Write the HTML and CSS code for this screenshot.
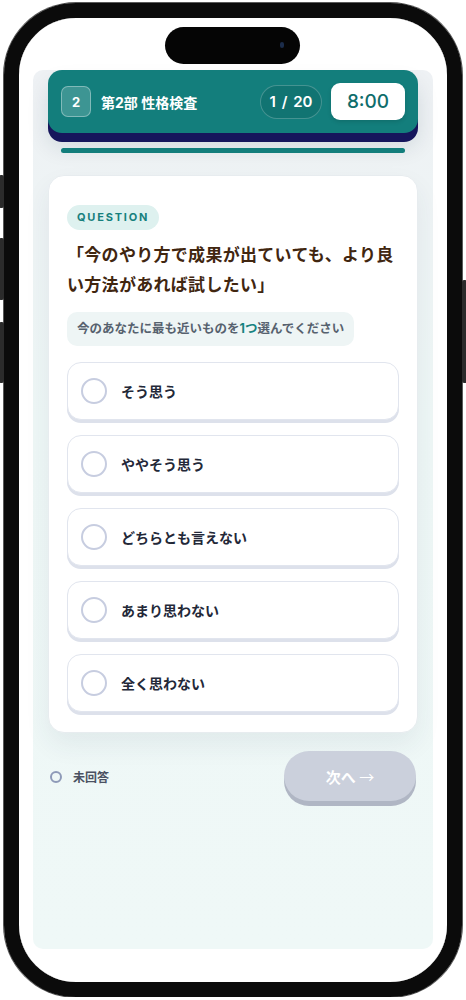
FILE: index.html
```html
<!DOCTYPE html>
<html lang="ja">

<head>
    <meta charset="UTF-8">
    <meta name="viewport" content="width=device-width, initial-scale=1.0">
    <title>第2部 性格検査</title>
    <link rel="stylesheet" href="styles.css">
</head>

<body>
    <div class="device">
        <span class="side-btn btn-action"></span>
        <span class="side-btn btn-vol-up"></span>
        <span class="side-btn btn-vol-down"></span>
        <span class="side-btn btn-power"></span>

        <div class="screen">
            <div class="island"><span class="cam"></span></div>

            <div class="app">
                <header class="test-header">
                    <div class="part">
                        <span class="part-no">2</span>
                        <span class="part-title">第2部 性格検査</span>
                    </div>
                    <div class="status">
                        <span class="counter">1 / 20</span>
                        <span class="timer">8:00</span>
                    </div>
                </header>

                <div class="progress">
                    <div class="progress-fill" style="width: 100%"></div>
                </div>

                <main class="question-card">
                    <span class="q-label">QUESTION</span>
                    <h2 class="q-text">「今のやり方で成果が出ていても、より良い方法があれば試したい」</h2>
                    <p class="q-hint">今のあなたに最も近いものを<strong>1つ</strong>選んでください</p>

                    <ul class="options">
                        <li class="option"><span class="radio"></span>そう思う</li>
                        <li class="option"><span class="radio"></span>ややそう思う</li>
                        <li class="option"><span class="radio"></span>どちらとも言えない</li>
                        <li class="option"><span class="radio"></span>あまり思わない</li>
                        <li class="option"><span class="radio"></span>全く思わない</li>
                    </ul>
                </main>

                <footer class="answer-bar">
                    <div class="answer-state">
                        <span class="state-dot"></span>
                        <span>未回答</span>
                    </div>
                    <button class="next-btn" disabled>次へ <span class="arrow">→</span></button>
                </footer>
            </div>
        </div>
    </div>
</body>

</html>
```

FILE: styles.css
```css
:root {
    --teal: #137e7c;
    --navy: #16165c;
    --ink: #232838;
    --brown: #412610;
}

body {
    margin: 0;
    background: #fff;
    font-family: Inter, "Noto Sans CJK JP", sans-serif;
}

/* phone frame */
.device {
    position: relative;
    width: 458px;
    height: 994px;
    margin: 3px 0 0 4px;
    box-sizing: border-box;
    border: 15px solid #0b0b0b;
    border-radius: 72px;
    box-shadow: 0 0 0 1px #5a5a5a, inset 0 0 0 1px #2a2a2a;
}

.side-btn {
    position: absolute;
    width: 5px;
    background: #2b2b2b;
    border-radius: 2px;
}

.btn-action {
    left: -20px;
    top: 157px;
    height: 33px;
}

.btn-vol-up {
    left: -20px;
    top: 220px;
    height: 62px;
}

.btn-vol-down {
    left: -20px;
    top: 304px;
    height: 61px;
}

.btn-power {
    right: -20px;
    top: 262px;
    height: 103px;
}

.screen {
    position: relative;
    height: 100%;
    box-sizing: border-box;
    padding: 52px 14px 33px;
    background: #fff;
    border-radius: 57px;
    overflow: hidden;
}

.island {
    position: absolute;
    left: 146px;
    top: 9px;
    width: 135px;
    height: 37px;
    background: #050505;
    border-radius: 19px;
    z-index: 2;
}

.island .cam {
    position: absolute;
    right: 16px;
    top: 15px;
    width: 4px;
    height: 6px;
    border-radius: 2px;
    background: #1b2c4a;
}

/* app panel */
.app {
    height: 100%;
    box-sizing: border-box;
    padding: 0 15px;
    background: linear-gradient(#eef1f4, #eef7f6 40%, #eff8f7);
    border-radius: 10px;
    display: flex;
    flex-direction: column;
}

.test-header {
    height: 63px;
    box-sizing: border-box;
    padding: 0 13px;
    display: flex;
    align-items: center;
    justify-content: space-between;
    background: var(--teal);
    border-radius: 14px;
    box-shadow: 0 9px 0 var(--navy), 0 14px 22px rgba(20, 40, 60, 0.12);
    color: #fff;
}

.part {
    display: flex;
    align-items: center;
    gap: 10px;
}

.part-no {
    width: 28px;
    height: 29px;
    display: flex;
    align-items: center;
    justify-content: center;
    border-radius: 7px;
    background: rgba(255, 255, 255, 0.18);
    border: 1px solid rgba(255, 255, 255, 0.35);
    font-size: 13px;
    font-weight: 700;
}

.part-title {
    font-size: 14px;
    font-weight: 700;
}

.status {
    display: flex;
    align-items: center;
    gap: 9px;
}

.counter {
    width: 62px;
    height: 34px;
    box-sizing: border-box;
    display: flex;
    align-items: center;
    justify-content: center;
    border-radius: 17px;
    border: 1px solid rgba(255, 255, 255, 0.22);
    background: rgba(0, 0, 0, 0.08);
    font-size: 15px;
    font-weight: 600;
    word-spacing: 2px;
}

.timer {
    width: 74px;
    height: 37px;
    display: flex;
    align-items: center;
    justify-content: center;
    border-radius: 9px;
    background: #fff;
    color: #0f6d6c;
    font-size: 19px;
    font-weight: 500;
    box-shadow: 0 2px 4px rgba(0, 0, 0, 0.12);
}

.progress {
    margin: 15px 13px 0;
    height: 5px;
    border-radius: 3px;
    background: #d5e4e4;
}

.progress-fill {
    height: 100%;
    border-radius: 3px;
    background: var(--teal);
}

/* question card */
.question-card {
    margin-top: 22px;
    padding: 29px 18px 20px;
    background: #fff;
    border: 1px solid #e7ecef;
    border-radius: 16px;
    box-shadow: 0 12px 26px rgba(40, 60, 80, 0.07);
}

.q-label {
    display: inline-block;
    height: 25px;
    line-height: 25px;
    padding: 0 10px;
    border-radius: 13px;
    background: #def1ef;
    color: #17807d;
    font-size: 11px;
    font-weight: 700;
    letter-spacing: 1.8px;
}

.q-text {
    margin: 10px 0 0;
    font-size: 17px;
    line-height: 30px;
    font-weight: 700;
    letter-spacing: 0.3px;
    color: var(--brown);
}

.q-hint {
    display: inline-block;
    margin: 12px 0 0;
    height: 34px;
    line-height: 34px;
    padding: 0 10px;
    border-radius: 10px;
    background: #eef5f5;
    color: #56616e;
    font-size: 12.5px;
    font-weight: 700;
}

.q-hint strong {
    color: #168280;
    font-weight: 700;
}

.options {
    list-style: none;
    margin: 16px 0 0;
    padding: 0;
}

.option {
    height: 58px;
    box-sizing: border-box;
    margin-bottom: 15px;
    padding: 0 13px;
    display: flex;
    align-items: center;
    gap: 14px;
    border: 1px solid #e1e5ee;
    border-radius: 14px;
    background: #fff;
    box-shadow: 0 3px 0 #dde1eb;
    color: var(--ink);
    font-size: 14px;
    font-weight: 700;
}

.option:last-child {
    margin-bottom: 0;
}

.radio {
    width: 26px;
    height: 26px;
    box-sizing: border-box;
    border: 2.5px solid #c7cde0;
    border-radius: 50%;
    flex-shrink: 0;
}

/* bottom bar */
.answer-bar {
    margin-top: 18px;
    padding: 0 2px 0 2px;
    display: flex;
    align-items: flex-start;
    justify-content: space-between;
}

.answer-state {
    margin-top: 17px;
    display: flex;
    align-items: center;
    gap: 11px;
    color: #4b5162;
    font-size: 12px;
    font-weight: 700;
}

.state-dot {
    width: 12px;
    height: 12px;
    box-sizing: border-box;
    border: 2.5px solid #8e9ab8;
    border-radius: 50%;
}

.next-btn {
    width: 132px;
    height: 50px;
    border: none;
    border-radius: 25px;
    background: #cbd0dc;
    box-shadow: 0 5px 0 #b0b6c4;
    color: #fff;
    font-family: inherit;
    font-size: 15px;
    font-weight: 700;
}

.next-btn .arrow {
    font-family: "Noto Sans CJK JP", sans-serif;
    font-weight: 400;
}
```
